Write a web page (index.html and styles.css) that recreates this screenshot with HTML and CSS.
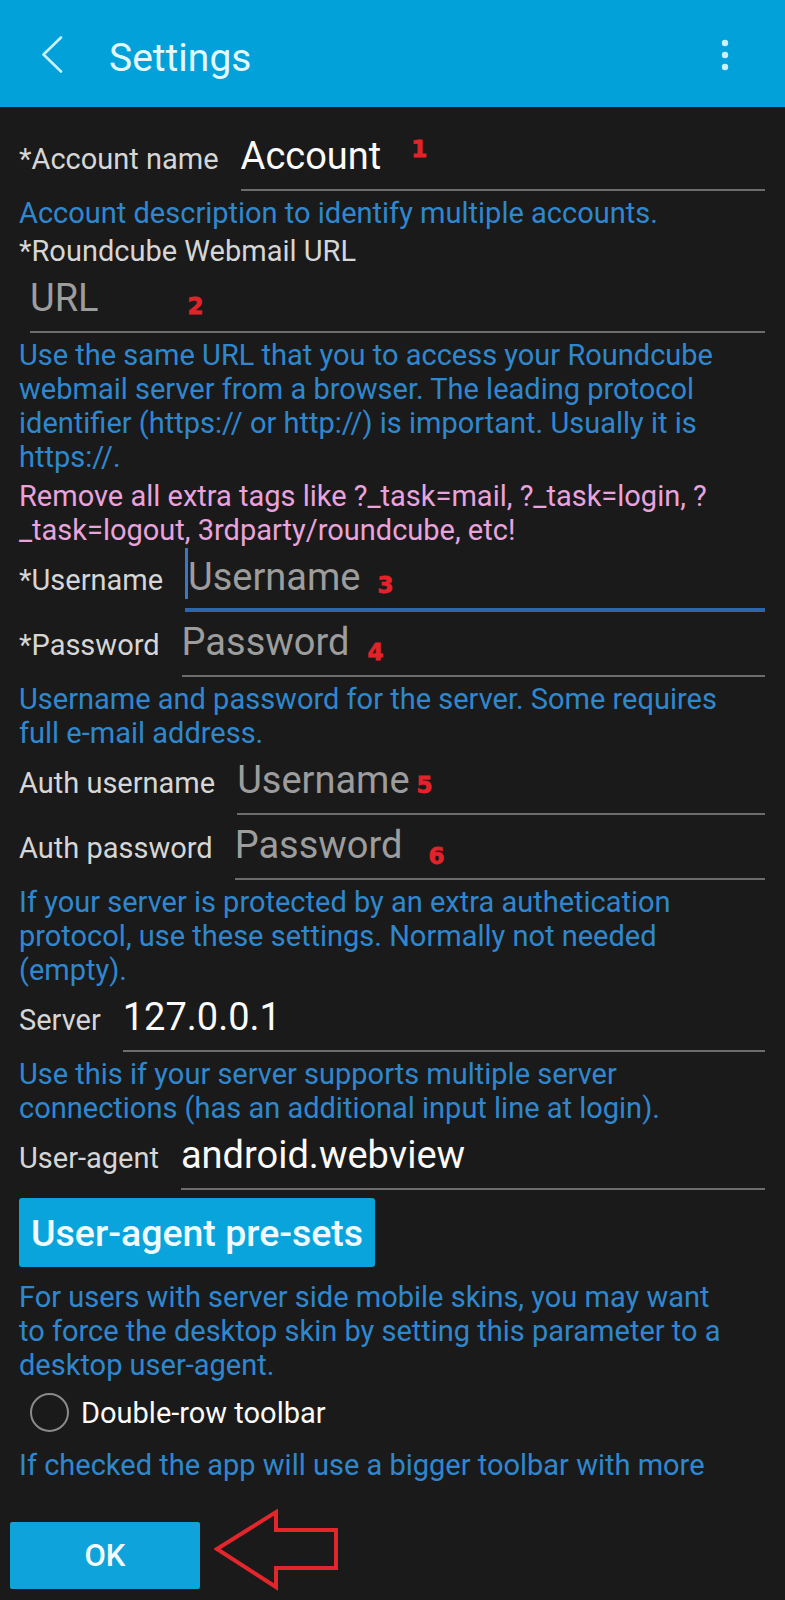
FILE: index.html
```html
<!DOCTYPE html>
<html lang="en">
<head>
    <meta charset="UTF-8">
    <meta name="viewport" content="width=device-width, initial-scale=1.0">
    <title>Settings</title>
    <link rel="stylesheet" href="styles.css">
</head>
<body>
    <header class="appbar">
        <svg class="back-icon" width="22" height="37" viewBox="0 0 22 37">
            <polyline points="20,1.5 2.5,18.5 20,35.5" fill="none" stroke="#c9f1ff" stroke-width="2.6" stroke-linecap="round" stroke-linejoin="round"/>
        </svg>
        <h1 class="appbar-title">Settings</h1>
        <svg class="menu-icon" width="20" height="36" viewBox="0 0 20 36">
            <circle cx="10" cy="6" r="3.2" fill="#c9f1ff"/>
            <circle cx="10" cy="18" r="3.2" fill="#c9f1ff"/>
            <circle cx="10" cy="30" r="3.2" fill="#c9f1ff"/>
        </svg>
    </header>

    <main class="content">
        <div class="field">
            <span class="field-label">*Account name</span>
            <div class="field-input">Account<span class="mark mark-1">1</span></div>
        </div>
        <p class="desc">Account description to identify multiple accounts.</p>

        <div class="block-label">*Roundcube Webmail URL</div>
        <div class="field-input url-input"><span class="hint">URL</span><span class="mark mark-2">2</span></div>
        <p class="desc">Use the same URL that you to access your Roundcube webmail server from a browser. The leading protocol identifier (https:// or http://) is important. Usually it is https://.</p>
        <p class="desc warn">Remove all extra tags like ?_task=mail, ?_task=login, ?_task=logout, 3rdparty/roundcube, etc!</p>

        <div class="field">
            <span class="field-label">*Username</span>
            <div class="field-input focused"><span class="cursor"></span><span class="hint">Username</span><span class="mark mark-3">3</span></div>
        </div>
        <div class="field">
            <span class="field-label">*Password</span>
            <div class="field-input"><span class="hint">Password</span><span class="mark mark-4">4</span></div>
        </div>
        <p class="desc">Username and password for the server. Some requires full e-mail address.</p>

        <div class="field">
            <span class="field-label">Auth username</span>
            <div class="field-input"><span class="hint">Username</span><span class="mark mark-5">5</span></div>
        </div>
        <div class="field">
            <span class="field-label">Auth password</span>
            <div class="field-input"><span class="hint">Password</span><span class="mark mark-6">6</span></div>
        </div>
        <p class="desc">If your server is protected by an extra authetication protocol, use these settings. Normally not needed (empty).</p>

        <div class="field">
            <span class="field-label">Server</span>
            <div class="field-input">127.0.0.1</div>
        </div>
        <p class="desc">Use this if your server supports multiple server connections (has an additional input line at login).</p>

        <div class="field">
            <span class="field-label">User-agent</span>
            <div class="field-input">android.webview</div>
        </div>
        <button class="preset-button">User-agent pre-sets</button>
        <p class="desc desc-after-button">For users with server side mobile skins, you may want to force the desktop skin by setting this parameter to a desktop user-agent.</p>

        <label class="radio-row">
            <span class="radio"></span>
            <span class="radio-text">Double-row toolbar</span>
        </label>
        <p class="desc desc-after-radio">If checked the app will use a bigger toolbar with more</p>
    </main>

    <footer class="footer">
        <button class="ok-button">OK</button>
        <svg class="hint-arrow" width="126" height="84" viewBox="0 0 126 84">
            <path d="M3 41 L62 4 L62 22 L122 22 L122 60 L62 60 L62 79 Z" fill="none" stroke="#e3262c" stroke-width="4" stroke-linejoin="miter"/>
        </svg>
    </footer>
</body>
</html>
```

FILE: styles.css
```css
* {
    margin: 0;
    padding: 0;
    box-sizing: border-box;
}

body {
    font-family: Roboto, 'Noto Sans', sans-serif;
    background: #1a1a1a;
    width: 785px;
    height: 1600px;
    display: flex;
    flex-direction: column;
    overflow: hidden;
}

/* barra superior */
.appbar {
    height: 107px;
    flex: none;
    background: #03a1da;
    display: flex;
    align-items: center;
    padding: 2px 50px 0 41px;
}

.appbar-title {
    font-size: 39px;
    font-weight: 400;
    color: #e2f8ff;
    margin-left: 46px;
    margin-top: 7px;
}

.menu-icon {
    margin-left: auto;
}

/* contenido */
.content {
    flex: 1;
    overflow: hidden;
    padding: 19px 20px 0 19px;
}

.field {
    display: flex;
    align-items: center;
}

.field-label {
    flex: none;
    font-size: 29px;
    color: #d6d6d6;
    margin-right: 22px;
    white-space: nowrap;
}

.field-input {
    flex: 1;
    font-size: 38px;
    line-height: 44px;
    color: #fafafa;
    padding: 8px 0 11px;
    border-bottom: 2px solid #6c6c6c;
    white-space: nowrap;
}

.field-input.focused {
    border-bottom: 4px solid #2c66ad;
    padding-bottom: 9px;
}

.url-input {
    margin-left: 11px;
}

.hint {
    color: #9d9d9d;
}

.cursor {
    display: inline-block;
    width: 3px;
    height: 51px;
    margin-top: -8px;
    background: #3a78c2;
    vertical-align: -9px;
}

.block-label {
    font-size: 29px;
    line-height: 34px;
    color: #d6d6d6;
    margin-top: 4px;
}

.desc {
    font-size: 29px;
    line-height: 34px;
    color: #2f88cf;
    margin-top: 5px;
    margin-right: 30px;
}

.desc.warn {
    color: #e9a3dd;
}

.desc-after-button {
    margin-top: 13px;
}

.desc-after-radio {
    margin-top: 16px;
}

/* marcas rojas */
.mark {
    font-family: 'DejaVu Sans', 'Liberation Sans', sans-serif;
    font-weight: 700;
    font-size: 23px;
    line-height: 1;
    color: #e3232a;
    -webkit-text-stroke: 0.8px #e3232a;
    position: relative;
}

.mark-1 { margin-left: 30px; top: -12px; }
.mark-2 { margin-left: 89px; top: 3px; }
.mark-3 { margin-left: 17px; top: 3px; }
.mark-4 { margin-left: 18px; top: 5px; }
.mark-5 { margin-left: 7px; }
.mark-6 { margin-left: 26px; top: 6px; }

.preset-button {
    display: block;
    margin-top: 8px;
    height: 69px;
    padding: 0 12px;
    background: #0aa4dc;
    color: #effbff;
    border: none;
    border-radius: 3px;
    font-family: Roboto, sans-serif;
    font-size: 37.5px;
    font-weight: 500;
}

.radio-row {
    display: flex;
    align-items: center;
    margin-top: 11px;
    padding-left: 11px;
}

.radio {
    width: 39px;
    height: 39px;
    border: 2px solid #8a8a8a;
    border-radius: 50%;
}

.radio-text {
    margin-left: 12px;
    font-size: 29px;
    color: #fafafa;
}

/* pie */
.footer {
    flex: none;
    height: 110px;
    position: relative;
    padding: 32px 0 0 10px;
}

.ok-button {
    width: 190px;
    height: 67px;
    background: #0ea4db;
    color: #f4fcff;
    border: none;
    border-radius: 2px;
    font-family: Roboto, sans-serif;
    font-size: 31px;
    font-weight: 500;
}

.hint-arrow {
    position: absolute;
    left: 214px;
    top: 18px;
}
```
